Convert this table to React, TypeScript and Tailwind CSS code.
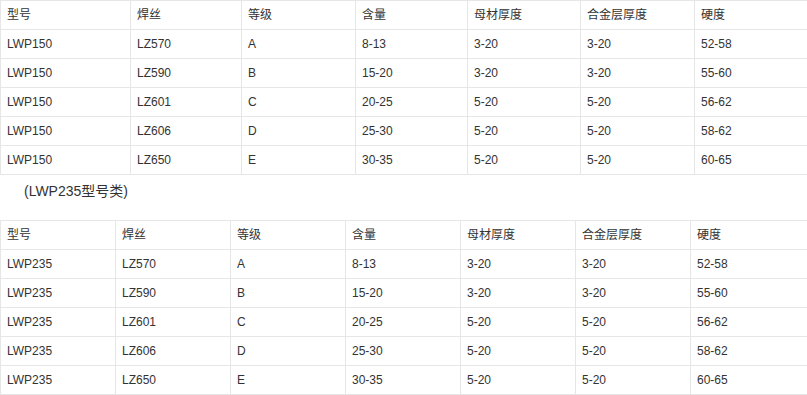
import React from 'react';

const headers = ['型号', '焊丝', '等级', '含量', '母材厚度', '合金层厚度', '硬度'];

const makeRows = (model: string) => [
  [model, 'LZ570', 'A', '8-13', '3-20', '3-20', '52-58'],
  [model, 'LZ590', 'B', '15-20', '3-20', '3-20', '55-60'],
  [model, 'LZ601', 'C', '20-25', '5-20', '5-20', '56-62'],
  [model, 'LZ606', 'D', '25-30', '5-20', '5-20', '58-62'],
  [model, 'LZ650', 'E', '30-35', '5-20', '5-20', '60-65'],
];

interface SpecTableProps {
  widths: string[];
  rows: string[][];
}

const SpecTable: React.FC<SpecTableProps> = ({ widths, rows }) => (
  <table className="w-[807px] table-fixed border-collapse text-[12px] text-[#333]">
    <colgroup>
      {widths.map((w, i) => (
        <col key={i} style={{ width: w }} />
      ))}
    </colgroup>
    <tbody>
      <tr className="h-[29px]">
        {headers.map((h) => (
          <td key={h} className="border border-[#e6e6e6] px-[6px] align-middle leading-none">
            {h}
          </td>
        ))}
      </tr>
      {rows.map((row, r) => (
        <tr key={r} className="h-[29px]">
          {row.map((cell, c) => (
            <td key={c} className="border border-[#e6e6e6] px-[6px] align-middle leading-none">
              {cell}
            </td>
          ))}
        </tr>
      ))}
    </tbody>
  </table>
);

export default function App() {
  return (
    <div
      className="w-[807px] h-[395px] overflow-hidden bg-white"
      style={{ fontFamily: '"Liberation Sans", "Noto Sans CJK SC", sans-serif' }}
    >
      {/* LWP150 */}
      <SpecTable
        widths={['130px', '111px', '114px', '112px', '113px', '114px', '113px']}
        rows={makeRows('LWP150')}
      />

      {/* caption */}
      <div className="h-[45px] pb-[13px] flex items-center pl-6 text-[14px] text-[#333]">(LWP235型号类)</div>

      {/* LWP235 */}
      <SpecTable
        widths={['115px', '115px', '115px', '115px', '115px', '115px', '117px']}
        rows={makeRows('LWP235')}
      />
    </div>
  );
}
